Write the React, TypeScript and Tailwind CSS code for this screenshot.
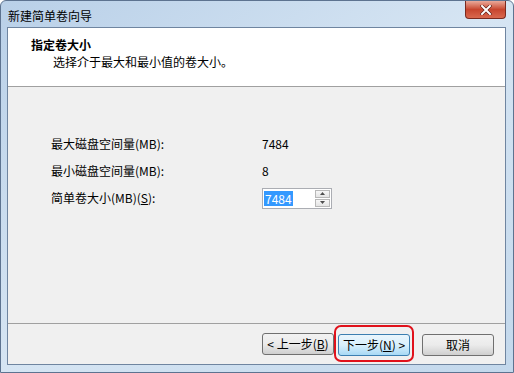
import React from "react";

const font = { fontFamily: '"SimSun", "Noto Sans CJK SC", "Liberation Sans", sans-serif' };

function WizardButton({ children, active }: { children: React.ReactNode; active?: boolean }) {
  return (
    <button
      className={
        active
          ? "h-[22px] w-[72px] rounded-[3px] border border-[#3c7fb1] bg-gradient-to-b from-[#eaf6fd] via-[#d9f0fc] to-[#a7d9f5] text-[12px] text-black leading-none"
          : "h-[22px] w-[72px] rounded-[3px] border border-[#707070] bg-gradient-to-b from-[#f2f2f2] via-[#ebebeb] to-[#cfcfcf] text-[12px] text-black leading-none"
      }
    >
      {children}
    </button>
  );
}

export default function App() {
  return (
    <div className="w-[514px] h-[373px] bg-white" style={font}>
      <div className="w-full h-full flex flex-col rounded-t-[6px] border border-[#5d7390] bg-gradient-to-br from-[#b9d0e8] via-[#d6e5f3] to-[#c3d8ec]">
        {/* title bar */}
        <div className="h-[26px] flex items-start justify-between">
          <div className="pl-[7px] pt-[6px] text-[12px] text-black">新建简单卷向导</div>
          <div className="mr-[7px] w-[41px] h-[18px] rounded-b-[4px] border border-t-0 border-[#7a2a1f] bg-gradient-to-b from-[#e9a99a] via-[#c7452e] to-[#d9684e] flex items-center justify-center">
            <svg width="12" height="10" viewBox="0 0 12 10">
              <path d="M2 1 L10 9 M10 1 L2 9" stroke="#5a1a12" strokeWidth="3.2" strokeLinecap="square" />
              <path d="M2 1 L10 9 M10 1 L2 9" stroke="#ffffff" strokeWidth="2" strokeLinecap="square" />
            </svg>
          </div>
        </div>

        {/* client area */}
        <div className="flex-1 ml-[6px] mr-[7px] mb-[7px] flex flex-col border border-[#6f85a0] bg-[#f0f0f0]">
          <div className="h-[59px] bg-white border-b border-[#a0a0a0] pl-[23px] pt-[9px]">
            <div className="text-[12px] font-bold text-black leading-[16px]">指定卷大小</div>
            <div className="pl-[22px] text-[12px] text-black leading-[16px] mt-[1px]">选择介于最大和最小值的卷大小。</div>
          </div>

          <div className="flex-1 pl-[43px] pt-[49px]">
            <div className="grid grid-cols-[211px_1fr] gap-y-[11px] text-[12px] text-black leading-[16px] items-center">
              <div>最大磁盘空间量(MB):</div>
              <div>7484</div>
              <div>最小磁盘空间量(MB):</div>
              <div>8</div>
              <div>简单卷大小(MB)(<span className="underline">S</span>):</div>
              <div className="-my-[3px]">
                <div className="w-[70px] h-[21px] flex items-center border border-[#abadb3] border-t-[#abadb3] bg-white">
                  <span className="ml-[1px] bg-[#3399ff] text-white px-[1px] leading-[15px]">7484</span>
                  <div className="ml-auto mr-[1px] flex flex-col gap-[1px]">
                    <div className="w-[15px] h-[8px] border border-[#b8b8b8] bg-gradient-to-b from-[#f7f7f7] to-[#e4e4e4] flex items-center justify-center">
                      <svg width="5" height="3" viewBox="0 0 5 3"><path d="M0 3 L2.5 0 L5 3 Z" fill="#4d4d4d" /></svg>
                    </div>
                    <div className="w-[15px] h-[8px] border border-[#b8b8b8] bg-gradient-to-b from-[#f7f7f7] to-[#e4e4e4] flex items-center justify-center">
                      <svg width="5" height="3" viewBox="0 0 5 3"><path d="M0 0 L2.5 3 L5 0 Z" fill="#4d4d4d" /></svg>
                    </div>
                  </div>
                </div>
              </div>
            </div>
          </div>

          {/* footer */}
          <div className="border-t border-[#a0a0a0] h-[41px] flex items-center justify-end pr-[11px] pb-[1px]">
            <WizardButton>&lt; 上一步(<span className="underline">B</span>)</WizardButton>
            <div className="relative ml-[4px]">
              <WizardButton active>下一步(<span className="underline">N</span>) &gt;</WizardButton>
              <div className="absolute -inset-x-[4px] -inset-y-[6px] rounded-[7px] border-[2.5px] border-[#e0111b] pointer-events-none" />
            </div>
            <div className="ml-[12px]">
              <WizardButton>取消</WizardButton>
            </div>
          </div>
        </div>
      </div>
    </div>
  );
}
